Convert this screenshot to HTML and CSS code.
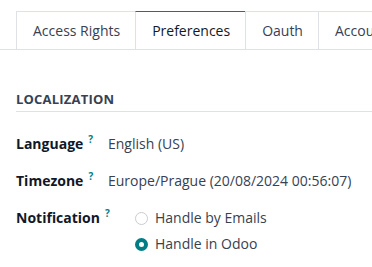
FILE: index.html
```html
<!DOCTYPE html>
<html>
<head>
<meta charset="utf-8">
<link rel="stylesheet" href="styles.css">
</head>
<body>
<div class="page">
  <ul class="tabs">
    <li class="tab">Access Rights</li>
    <li class="tab active">Preferences</li>
    <li class="tab">Oauth</li>
    <li class="tab">Account Security</li>
  </ul>
  <div class="sheet">
    <h3 class="section-title">Localization</h3>
    <div class="row">
      <div class="label">Language<sup class="help">?</sup></div>
      <div class="value">English (US)</div>
    </div>
    <div class="row">
      <div class="label">Timezone<sup class="help">?</sup></div>
      <div class="value">Europe/Prague (20/08/2024 00:56:07)</div>
    </div>
    <div class="row row-notif">
      <div class="label">Notification<sup class="help">?</sup></div>
      <div class="radios">
        <label class="radio"><span class="dot"></span>Handle by Emails</label>
        <label class="radio"><span class="dot checked"></span>Handle in Odoo</label>
      </div>
    </div>
  </div>
</div>
</body>
</html>
```
FILE: styles.css
```css
html, body {
  margin: 0;
  padding: 0;
  background: #ffffff;
  overflow: hidden;
}
body {
  font-family: "Open Sans", "Noto Sans", sans-serif;
  font-size: 14px;
  color: #374151;
}
.page {
  width: 372px;
  padding-top: 11px;
}
.tabs {
  list-style: none;
  margin: 0;
  padding: 0 0 0 16px;
  display: flex;
  border-bottom: 1px solid #dee2e6;
  white-space: nowrap;
  overflow: hidden;
}
.tab {
  flex: none;
  height: 37px;
  line-height: 37px;
  padding: 0 15px 0 16px;
  border: 1px solid #dee2e6;
  border-bottom: none;
  margin-right: -1px;
  margin-bottom: -1px;
  color: #374151;
  background: #fff;
}
.tab.active {
  border-top-color: #714b67;
  color: #111827;
  height: 38px;
}
.sheet {
  padding: 0 0 0 16px;
}
.section-title {
  margin: 41px 0 0 0;
  padding-bottom: 4px;
  font-size: 13px;
  font-weight: 700;
  text-transform: uppercase;
  color: #374151;
  border-bottom: 1px solid #dee2e6;
  line-height: 16px;
  letter-spacing: 0.2px;
}
.row {
  display: flex;
  align-items: flex-start;
  line-height: 20px;
  margin-top: 22px;
}
.row + .row {
  margin-top: 17px;
}
.label {
  width: 92px;
  flex: none;
  font-weight: 700;
  color: #111827;
}
.help {
  color: #017e84;
  font-weight: 700;
  font-size: 10px;
  margin-left: 5px;
  vertical-align: 6px;
  line-height: 0;
}
.value {
  color: #374151;
}
.radios {
  padding-left: 27px;
  display: flex;
  flex-direction: column;
  gap: 6px;
}
.radio {
  display: flex;
  align-items: center;
  gap: 7px;
  color: #374151;
}
.dot {
  width: 13px;
  height: 13px;
  box-sizing: border-box;
  border-radius: 50%;
  border: 1px solid #c9ccd1;
  background: #fff;
}
.dot.checked {
  border: 4px solid #017e84;
}
```
